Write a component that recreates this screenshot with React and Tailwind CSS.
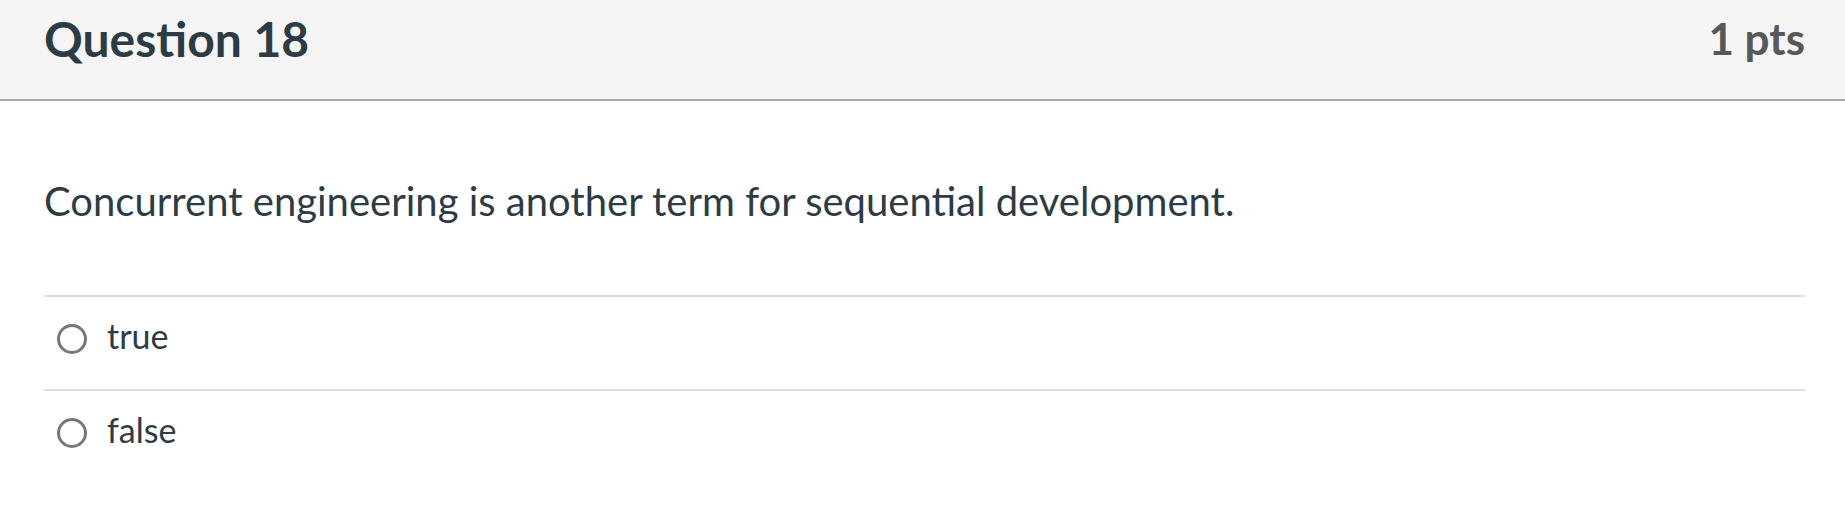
import React from 'react';

const answers = ['true', 'false'];

function Radio() {
  return (
    <span className="block w-[30px] h-[30px] rounded-full border-[3px] border-[#777777] bg-white shrink-0" />
  );
}

export default function App() {
  return (
    <div className="w-[1845px] h-[522px] bg-white text-[#2d3b45]" style={{ fontFamily: 'Lato, "Noto Sans", sans-serif' }}>
      {/* Header */}
      <div className="h-[101px] bg-[#f5f5f5] border-b-2 border-[#a8a8a8] flex justify-between pl-[44px] pr-[40px]">
        <h2 className="text-[48px] font-bold leading-none pt-[15px] text-[#2d3b45]">Question 18</h2>
        <div className="text-[44px] font-bold leading-none pt-[16px] text-[#585858]">1 pts</div>
      </div>

      {/* Body */}
      <div className="pl-[44px] pr-[40px]">
        <p className="text-[40px] leading-none pt-[80px] pb-[74px]">
          Concurrent engineering is another term for sequential development.
        </p>
        <div>
          {answers.map((a) => (
            <div key={a} className="h-[94px] border-t-2 border-[#dddddd] flex items-start">
              <div className="flex items-center gap-[20px] pl-[13px] pt-[27px]">
                <Radio />
                <span className="text-[34px] leading-none -mt-[6px]">{a}</span>
              </div>
            </div>
          ))}
        </div>
      </div>
    </div>
  );
}
